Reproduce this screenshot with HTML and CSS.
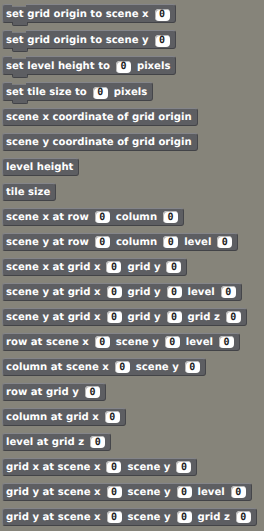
FILE: index.html
```html
<!DOCTYPE html>
<html lang="en">
<head>
    <meta charset="UTF-8">
    <title>Grid blocks</title>
    <link rel="stylesheet" href="styles.css">
</head>
<body>
    <div class="palette">
        <div class="block command"><span>set grid origin to scene x</span><span class="num">0</span></div>
        <div class="block command"><span>set grid origin to scene y</span><span class="num">0</span></div>
        <div class="block command"><span>set level height to</span><span class="num">0</span><span>pixels</span></div>
        <div class="block command"><span>set tile size to</span><span class="num">0</span><span>pixels</span></div>

        <div class="block reporter"><span>scene x coordinate of grid origin</span></div>
        <div class="block reporter"><span>scene y coordinate of grid origin</span></div>
        <div class="block reporter"><span>level height</span></div>
        <div class="block reporter"><span>tile size</span></div>
        <div class="block reporter"><span>scene x at row</span><span class="num">0</span><span>column</span><span class="num">0</span></div>
        <div class="block reporter"><span>scene y at row</span><span class="num">0</span><span>column</span><span class="num">0</span><span>level</span><span class="num">0</span></div>
        <div class="block reporter"><span>scene x at grid x</span><span class="num">0</span><span>grid y</span><span class="num">0</span></div>
        <div class="block reporter"><span>scene y at grid x</span><span class="num">0</span><span>grid y</span><span class="num">0</span><span>level</span><span class="num">0</span></div>
        <div class="block reporter"><span>scene y at grid x</span><span class="num">0</span><span>grid y</span><span class="num">0</span><span>grid z</span><span class="num">0</span></div>
        <div class="block reporter"><span>row at scene x</span><span class="num">0</span><span>scene y</span><span class="num">0</span><span>level</span><span class="num">0</span></div>
        <div class="block reporter"><span>column at scene x</span><span class="num">0</span><span>scene y</span><span class="num">0</span></div>
        <div class="block reporter"><span>row at grid y</span><span class="num">0</span></div>
        <div class="block reporter"><span>column at grid x</span><span class="num">0</span></div>
        <div class="block reporter"><span>level at grid z</span><span class="num">0</span></div>
        <div class="block reporter"><span>grid x at scene x</span><span class="num">0</span><span>scene y</span><span class="num">0</span></div>
        <div class="block reporter"><span>grid y at scene x</span><span class="num">0</span><span>scene y</span><span class="num">0</span><span>level</span><span class="num">0</span></div>
        <div class="block reporter"><span>grid y at scene x</span><span class="num">0</span><span>scene y</span><span class="num">0</span><span>grid z</span><span class="num">0</span></div>
    </div>
</body>
</html>
```

FILE: styles.css
```css
* {
    box-sizing: border-box;
}
body {
    margin: 0;
    background-color: #86847a;
    font-family: "DejaVu Sans", Verdana, sans-serif;
    font-weight: bold;
    font-size: 10.1px;
    text-rendering: geometricPrecision;
    color: #ffffff;
}
.palette {
    display: flex;
    flex-direction: column;
    align-items: flex-start;
    padding: 4px 0 0 2px;
}
.block {
    position: relative;
    display: flex;
    align-items: center;
    gap: 6px;
    background-color: #5d5e62;
    border-top: 1px solid #84858a;
    border-left: 1px solid #7c7d81;
    border-bottom: 1px solid #424347;
    border-right: 1px solid #45464a;
    border-radius: 3px;
    padding: 0 5px 0 3px;
    white-space: nowrap;
}
.command {
    height: 19px;
    padding-top: 2px;
    margin-bottom: 7px;
}
/* notch on top */
.command::before {
    content: "";
    position: absolute;
    left: 9px;
    top: -1px;
    width: 14px;
    height: 2px;
    background-color: #86847a;
    border-bottom: 1px solid #7c7d81;
}
/* tab at bottom */
.command::after {
    content: "";
    position: absolute;
    left: 9px;
    bottom: -4px;
    width: 14px;
    height: 3px;
    background-color: #5d5e62;
    border-bottom: 1px solid #424347;
    border-left: 1px solid #424347;
    border-right: 1px solid #424347;
    border-radius: 0 0 2px 2px;
}
.reporter {
    height: 18px;
    margin-bottom: 7px;
}
.num {
    display: flex;
    align-items: center;
    justify-content: center;
    width: 15px;
    height: 12px;
    background-color: #ffffff;
    border-radius: 4px;
    color: #1e1e1e;
    font-family: "DejaVu Sans Mono", monospace;
    font-size: 10px;
    box-shadow: inset 1px 1px 0 #b8b8b8;
}
```
